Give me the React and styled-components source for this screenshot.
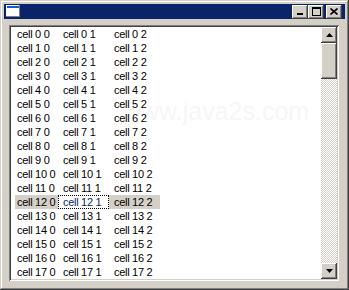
import React from "react";
import styled, { createGlobalStyle } from "styled-components";

const Global = createGlobalStyle`
	html, body {
		margin: 0;
		padding: 0;
		background: #ffffff;
	}
	* {
		box-sizing: border-box;
	}
`;

const raised = `
	box-shadow: inset -1px -1px #404040, inset 1px 1px #ffffff,
		inset -2px -2px #808080, inset 2px 2px #d4d0c8;
`;

const Window = styled.div`
	width: 349px;
	height: 290px;
	padding: 4px;
	background: #d4d0c8;
	display: flex;
	flex-direction: column;
	box-shadow: inset -1px -1px #404040, inset 1px 1px #d4d0c8,
		inset -2px -2px #808080, inset 2px 2px #ffffff;
	font-family: "Liberation Sans", Arial, sans-serif;
	font-size: 11px;
`;

const TitleBar = styled.div`
	height: 18px;
	background: #0a246a;
	display: flex;
	align-items: center;
	padding: 0 3px 0 2px;
`;

const TitleIcon = styled.svg`
	width: 14px;
	height: 12px;
	display: block;
	margin-top: -1px;
`;

const Spacer = styled.div`
	flex: 1;
`;

const CaptionButton = styled.div`
	width: 16px;
	height: 14px;
	background: #d4d0c8;
	${raised}
	display: flex;
	align-items: center;
	justify-content: center;
	margin-left: ${(p) => (p.$gap ? "2px" : "0")};
`;

const Body = styled.div`
	flex: 1;
	padding: 6px 6px 5px 5px;
	display: flex;
`;

const ListBox = styled.div`
	flex: 1;
	padding: 2px;
	background: #ffffff;
	display: flex;
	box-shadow: inset 1px 1px #808080, inset -1px -1px #ffffff,
		inset 2px 2px #404040, inset -2px -2px #d4d0c8;
	overflow: hidden;
`;

const TableArea = styled.div`
	flex: 1;
	padding-left: 4px;
	overflow: hidden;
	position: relative;
`;

const Row = styled.div`
	display: flex;
	height: 14px;
	line-height: 14px;
	width: 145px;
	background: ${(p) => (p.$selected ? "#d4d0c8" : "transparent")};
	white-space: nowrap;
	letter-spacing: -0.3px;
`;

const Cell = styled.div`
	width: ${(p) => (p.$first ? "43px" : "51px")};
	padding-left: ${(p) => (p.$first ? "2px" : "5px")};
	color: ${(p) => (p.$focused ? "#0a246a" : "#000000")};
	background: ${(p) => (p.$focused ? "#ffffff" : "transparent")};
	outline: ${(p) => (p.$focused ? "1px dotted #000000" : "none")};
	outline-offset: -1px;
	overflow: hidden;
`;

const Watermark = styled.div`
	position: absolute;
	left: 112px;
	top: 70px;
	font-size: 25px;
	color: #000000;
	opacity: 0.03;
	pointer-events: none;
	white-space: nowrap;
`;

const ScrollBar = styled.div`
	width: 16px;
	display: flex;
	flex-direction: column;
`;

const ArrowButton = styled.div`
	width: 16px;
	height: 16px;
	background: #d4d0c8;
	${raised}
	display: flex;
	align-items: center;
	justify-content: center;
`;

const Thumb = styled.div`
	width: 16px;
	height: 36px;
	background: #d4d0c8;
	${raised}
`;

const Track = styled.div`
	flex: 1;
	background: repeating-conic-gradient(#d4d0c8 0 25%, #ffffff 0 50%) 0 0 / 2px 2px;
`;

const rows = Array.from({ length: 18 }, (_, i) => i);

function Arrow({ down }) {
	return (
		<svg width="7" height="4" viewBox="0 0 7 4">
			{down ? (
				<polygon points="0,0 7,0 3.5,4" fill="#000" />
			) : (
				<polygon points="3.5,0 7,4 0,4" fill="#000" />
			)}
		</svg>
	);
}

export default function App() {
	return (
		<>
			<Global />
			<Window>
				<TitleBar>
					<TitleIcon viewBox="0 0 14 12">
						<rect x="0" y="0" width="14" height="12" fill="#ffffff" />
						<rect x="1" y="1" width="12" height="2" fill="#0a5fd8" />
						<rect x="0" y="11" width="14" height="1" fill="#808080" />
						<rect x="13" y="0" width="1" height="12" fill="#808080" />
					</TitleIcon>
					<Spacer />
					<CaptionButton>
						<svg width="8" height="7" viewBox="0 0 8 7">
							<rect x="1" y="5" width="6" height="2" fill="#000" />
						</svg>
					</CaptionButton>
					<CaptionButton>
						<svg width="9" height="9" viewBox="0 0 9 9">
							<rect x="0" y="0" width="9" height="2" fill="#000" />
							<rect x="0" y="0" width="1" height="9" fill="#000" />
							<rect x="8" y="0" width="1" height="9" fill="#000" />
							<rect x="0" y="8" width="9" height="1" fill="#000" />
						</svg>
					</CaptionButton>
					<CaptionButton $gap>
						<svg width="8" height="7" viewBox="0 0 8 7">
							<path d="M0.5 0.5 L7.5 6.5 M7.5 0.5 L0.5 6.5" stroke="#000" strokeWidth="1.6" />
						</svg>
					</CaptionButton>
				</TitleBar>
				<Body>
					<ListBox>
						<TableArea>
							<Watermark>www.java2s.com</Watermark>
							{rows.map((r) => (
								<Row key={r} $selected={r === 12}>
									<Cell $first>cell {r} 0</Cell>
									<Cell $focused={r === 12}>cell {r} 1</Cell>
									<Cell>cell {r} 2</Cell>
								</Row>
							))}
						</TableArea>
						<ScrollBar>
							<ArrowButton>
								<Arrow />
							</ArrowButton>
							<Thumb />
							<Track />
							<ArrowButton>
								<Arrow down />
							</ArrowButton>
						</ScrollBar>
					</ListBox>
				</Body>
			</Window>
		</>
	);
}
